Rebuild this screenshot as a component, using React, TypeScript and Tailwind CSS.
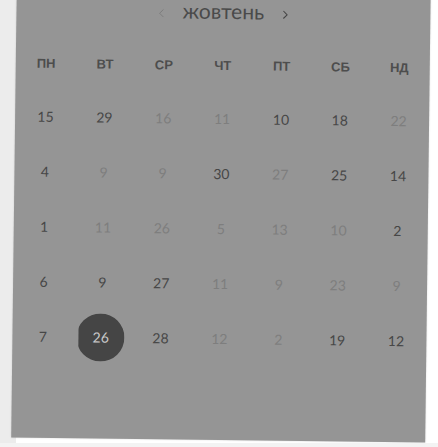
import { ChevronLeft, ChevronRight } from 'lucide-react';

const days = ['пн', 'вт', 'ср', 'чт', 'пт', 'сб', 'нд'];

// [value, muted]
const weeks: [number, boolean][][] = [
  [[15, false], [29, false], [16, true], [11, true], [10, false], [18, false], [22, true]],
  [[4, false], [9, true], [9, true], [30, false], [27, true], [25, false], [14, false]],
  [[1, false], [11, true], [26, true], [5, true], [13, true], [10, true], [2, false]],
  [[6, false], [9, false], [27, false], [11, true], [9, true], [23, true], [9, true]],
  [[7, false], [26, false], [28, false], [12, true], [2, true], [19, false], [12, false]],
];

export default function App() {
  return (
    <div className="relative flex h-[447px] w-[438px] overflow-hidden bg-white">
      {/* Left rail */}
      <div className="w-[16px] shrink-0 bg-[#ececec]" />

      <div className="flex-1">
        <div className="-mt-[20px] -ml-[2px] h-[460px] w-[414px] rotate-[0.7deg] bg-[#959595] shadow-[0_0_2px_rgba(0,0,0,0.15)]">
          {/* Month switcher */}
          <div className="flex h-[64px] items-end justify-center gap-[14px] pb-[23px]">
            <ChevronLeft className="h-[14px] w-[14px] text-[#7c7c7c]" strokeWidth={1.6} />
            <span className="font-['Lato',sans-serif] text-[21px] leading-none text-[#4a4a4a]">жовтень</span>
            <ChevronRight className="h-[14px] w-[14px] text-[#454545]" strokeWidth={1.8} />
          </div>

          {/* Weekday labels */}
          <div className="grid h-[44px] grid-cols-7 items-center px-[1px]">
            {days.map((d) => (
              <div
                key={d}
                className="text-center font-['Liberation_Sans',sans-serif] text-[13px] font-bold uppercase text-[#4d4d4d]"
              >
                {d}
              </div>
            ))}
          </div>

          {/* Dates */}
          <div className="mt-[3px] grid grid-cols-7 px-[1px]">
            {weeks.map((week, wi) =>
              week.map(([n, muted], di) => {
                const selected = wi === 4 && di === 1;
                return (
                  <div key={`${wi}-${di}`} className="flex h-[55px] items-center justify-center">
                    {selected ? (
                      <div className="flex h-[48px] w-[46px] justify-end overflow-hidden">
                        <div className="flex h-[48px] w-[48px] shrink-0 items-center justify-center rounded-full bg-[#454545] font-['Lato',sans-serif] text-[14px] text-[#c9c9c9]">
                          {n}
                        </div>
                      </div>
                    ) : (
                      <span
                        className={`font-['Lato',sans-serif] text-[14px] ${
                          muted ? 'text-[#7e7e7e]' : 'text-[#474747]'
                        }`}
                      >
                        {n}
                      </span>
                    )}
                  </div>
                )
              })
            )}
          </div>
        </div>
      </div>

      {/* Bottom strip */}
      <div className="absolute bottom-0 left-0 h-[4px] w-full bg-[#f3f3f3]" />
    </div>
  );
}
